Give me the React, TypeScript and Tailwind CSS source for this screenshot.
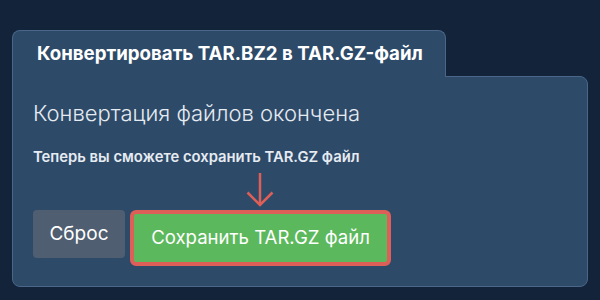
export default function App() {
  return (
    <div
      className="h-[300px] w-[600px] bg-[#12233a] px-3 pt-[30px]"
      style={{ fontFamily: 'Inter, "Noto Sans", sans-serif' }}
    >
      <div className="relative z-10 -mb-px inline-flex h-[47px] w-[434px] items-center rounded-t-lg border border-b-0 border-[#4a6688] bg-[#2d4a69] pl-6">
        <h1 className="text-[18.7px] font-bold text-white">Конвертировать TAR.BZ2 в TAR.GZ-файл</h1>
      </div>
      <div className="h-[211px] w-[576px] rounded-tr-lg rounded-b-lg border border-[#4a6688] bg-[#2d4a69] px-5 pt-[20px]">
        <h2 className="text-[22px] font-light leading-8 text-[#e6ebf1]">Конвертация файлов окончена</h2>
        <p className="mt-[18px] text-[14.8px] font-semibold leading-5 text-[#e6ebf1]">
          Теперь вы сможете сохранить TAR.GZ файл
        </p>
        <div className="mt-[43px] flex items-start gap-[5px]">
          <button className="h-12 w-[92px] rounded bg-[#4f5e70] text-[19px] text-white">Сброс</button>
          <div className="relative">
            <svg
              className="absolute left-[116px] top-[-38px]"
              width="28"
              height="36"
              viewBox="0 0 28 36"
              fill="none"
              stroke="#de5f58"
              strokeWidth="2.5"
            >
              <path d="M14 1 L14 33" />
              <path d="M1.5 20.5 L14 33 L26.5 20.5" />
            </svg>
            <button className="h-14 w-[261px] rounded-md border-4 border-[#de5f58] bg-[#5cb85c] text-[18.6px] text-white">
              Сохранить TAR.GZ файл
            </button>
          </div>
        </div>
      </div>
    </div>
  )
}
